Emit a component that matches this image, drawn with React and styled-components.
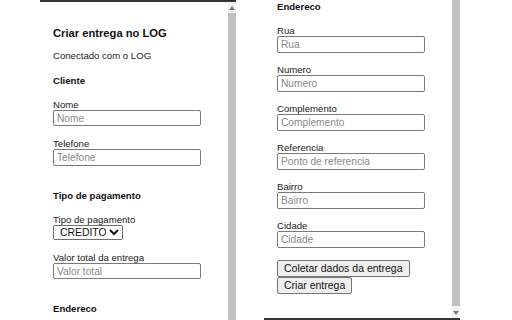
import React from "react";
import styled, { createGlobalStyle } from "styled-components";

const GlobalStyle = createGlobalStyle`
	html, body {
		margin: 0;
		padding: 0;
		background: #ffffff;
	}
	body {
		font-family: "Liberation Sans", Arial, sans-serif;
		color: #1f1f1f;
	}
`;

function Arrow({ down }) {
	return (
		<ArrowBox>
			<svg width="6" height="4" viewBox="0 0 6 4">
				{down ? (
					<polygon points="0,0 6,0 3,4" fill="#7a7a7a" />
				) : (
					<polygon points="0,4 6,4 3,0" fill="#7a7a7a" />
				)}
			</svg>
		</ArrowBox>
	);
}

function Field({ label, placeholder }) {
	return (
		<FieldBox>
			<Label>{label}</Label>
			<Input type="text" placeholder={placeholder} />
		</FieldBox>
	);
}

export default function App() {
	return (
		<Page>
			<GlobalStyle />
			<Panel $edge="top">
				<Content $top="25px">
					<Title>Criar entrega no LOG</Title>
					<Status>Conectado com o LOG</Status>
					<Section>
						<SectionTitle>Cliente</SectionTitle>
						<Field label="Nome" placeholder="Nome" />
						<Field label="Telefone" placeholder="Telefone" />
					</Section>
					<Section>
						<SectionTitle>Tipo de pagamento</SectionTitle>
						<FieldBox>
							<Label>Tipo de pagamento</Label>
							<Select defaultValue="CREDITO">
								<option>CREDITO</option>
								<option>DEBITO</option>
								<option>DINHEIRO</option>
							</Select>
						</FieldBox>
						<Field label="Valor total da entrega" placeholder="Valor total" />
					</Section>
					<Section>
						<SectionTitle>Endereco</SectionTitle>
					</Section>
				</Content>
				<Scrollbar>
					<Arrow />
					<Thumb />
				</Scrollbar>
			</Panel>

			<Panel $edge="bottom">
				<Content $top="1px">
					<Section $first>
						<SectionTitle $first>Endereco</SectionTitle>
						<Field label="Rua" placeholder="Rua" />
						<Field label="Numero" placeholder="Numero" />
						<Field label="Complemento" placeholder="Complemento" />
						<Field label="Referencia" placeholder="Ponto de referencia" />
						<Field label="Bairro" placeholder="Bairro" />
						<Field label="Cidade" placeholder="Cidade" />
					</Section>
					<Actions>
						<Button>Coletar dados da entrega</Button>
						<Button>Criar entrega</Button>
					</Actions>
				</Content>
				<Scrollbar>
					<Thumb $short />
					<Arrow down />
				</Scrollbar>
			</Panel>
		</Page>
	);
}

const Page = styled.div`
	display: flex;
	flex-direction: row;
	gap: 28px;
	padding-left: 40px;
	height: 320px;
	overflow: hidden;
`;

const Panel = styled.div`
	display: flex;
	flex-direction: row;
	width: 196px;
	height: 320px;
	box-sizing: border-box;
	background: #ffffff;
	overflow: hidden;
	border-top: ${(p) => (p.$edge === "top" ? "2px solid #353535" : "0")};
	border-bottom: ${(p) => (p.$edge === "bottom" ? "2px solid #353535" : "0")};
`;

const Content = styled.div`
	flex: 1;
	display: flex;
	flex-direction: column;
	padding: ${(p) => p.$top} 0 0 13px;
	overflow: hidden;
`;

const Title = styled.h3`
	margin: 0;
	font-size: 11.2px;
	line-height: 13px;
	font-weight: bold;
	color: #111;
`;

const Status = styled.p`
	margin: 10.3px 0 0 0;
	font-size: 9.6px;
	line-height: 11px;
	color: #222;
`;

const Section = styled.div`
	display: flex;
	flex-direction: column;
	margin-top: ${(p) => (p.$first ? "0" : "13.4px")};
	& + & {
		margin-top: 24px;
	}
`;

const SectionTitle = styled.h4`
	margin: 0 0 13px 0;
	font-size: 9.6px;
	line-height: 11px;
	font-weight: bold;
	color: #111;
`;

const FieldBox = styled.div`
	display: flex;
	flex-direction: column;
	align-items: flex-start;
	& + & {
		margin-top: 11.3px;
	}
`;

const Label = styled.label`
	font-size: 9.6px;
	line-height: 11px;
	color: #222;
`;

const Input = styled.input`
	box-sizing: border-box;
	width: 148px;
	height: 16.8px;
	margin: 0;
	padding: 0 3px;
	border: 1px solid #7a7a7a;
	border-radius: 2px;
	font-family: "Liberation Sans", Arial, sans-serif;
	font-size: 10.2px;
	color: #222;
	background: #fff;
	&::placeholder {
		color: #8a8a8a;
	}
`;

const Select = styled.select`
	box-sizing: border-box;
	width: 70px;
	height: 15px;
	margin: 0.8px 0 0 0;
	padding: 0 0 0 2px;
	border: 1px solid #6e6e6e;
	border-radius: 2px;
	font-family: "Liberation Sans", Arial, sans-serif;
	font-size: 10.4px;
	color: #111;
	background: #fff;
`;

const Actions = styled.div`
	display: flex;
	flex-direction: column;
	align-items: flex-start;
	gap: 0.6px;
	margin-top: 11.7px;
`;

const Button = styled.button`
	box-sizing: border-box;
	height: 16.6px;
	margin: 0;
	padding: 0 6px;
	border: 1px solid #767676;
	border-radius: 2px;
	background: #efefef;
	font-family: "Liberation Sans", Arial, sans-serif;
	font-size: 10.5px;
	line-height: 1;
	color: #111;
`;

const Scrollbar = styled.div`
	width: 8px;
	display: flex;
	flex-direction: column;
	background: #f3f3f3;
`;

const ArrowBox = styled.div`
	height: 11px;
	display: flex;
	align-items: center;
	justify-content: center;
	flex-shrink: 0;
`;

const Thumb = styled.div`
	flex: 1;
	background: #c1c1c1;
	margin: ${(p) => (p.$short ? "0 0 1px 0" : "0")};
`;
